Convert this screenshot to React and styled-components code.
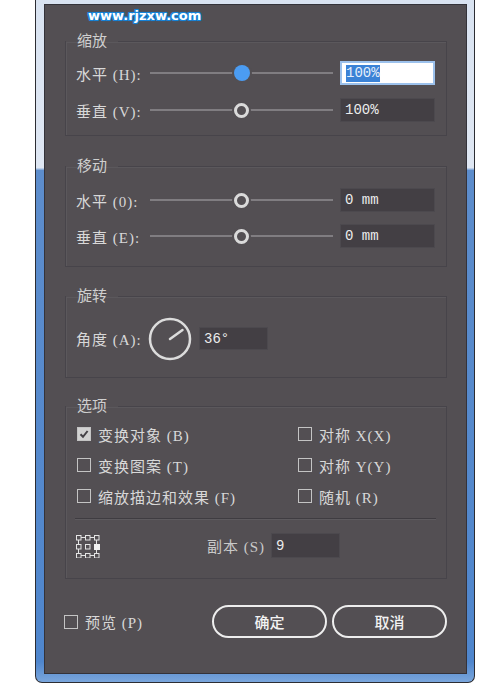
import React from 'react';
import styled, { createGlobalStyle } from 'styled-components';

const GlobalStyle = createGlobalStyle`
  html, body {
    margin: 0;
    background: #ffffff;
  }
  body {
    font-family: "Liberation Serif", "Noto Sans CJK SC", serif;
  }
`;

const Frame = styled.div`
  box-sizing: border-box;
  margin-left: 35px;
  width: 440px;
  height: 683px;
  padding: 4px 7px 8px 8px;
  border: 1px solid #2c2d33;
  border-top: none;
  border-radius: 0 0 7px 7px;
  background: linear-gradient(
    to bottom,
    #d9e3f1 0,
    #dfe7f3 24.6%,
    #5d8dcc 25%,
    #4f86cd 97%,
    #7aa6dc 100%
  );
`;

const Panel = styled.div`
  box-sizing: border-box;
  height: 670px;
  border: 1px solid #34333a;
  background: #534f53;
  padding: 0 19px 0 20px;
  display: flex;
  flex-direction: column;
  color: #d6d6d6;
`;

const Watermark = styled.div`
  height: 27px;
  padding: 2px 0 0 23px;
  box-sizing: border-box;
  font-family: "DejaVu Sans", Verdana, sans-serif;
  font-weight: bold;
  font-size: 13px;
  line-height: 18px;
  color: #ffffff;
  text-shadow: 1px 0 0 #1683d8, -1px 0 0 #1683d8, 0 1px 0 #1683d8,
    0 -1px 0 #1683d8, 1px 1px 0 #1683d8, -1px -1px 0 #1683d8,
    1px -1px 0 #1683d8, -1px 1px 0 #1683d8, 0 0 3px #1683d8;
`;

const Group = styled.fieldset`
  margin: ${p => p.$mt || 0}px 0 0 0;
  padding: ${p => p.$pt}px 10px ${p => p.$pb}px 10px;
  border: 1px solid #47444a;
  box-shadow: inset 1px 1px 0 #5b585c;
  min-width: 0;
  display: flex;
  flex-direction: column;
  gap: ${p => p.$gap || 0}px;
`;

const Legend = styled.legend`
  padding: 0 11px;
  margin-left: -10px;
  font-size: 15px;
  line-height: 18px;
  color: #cfcfcf;
`;

const Row = styled.div`
  display: flex;
  align-items: center;
  height: ${p => p.$h || 24}px;
`;

const Label = styled.span`
  width: ${p => p.$w || 74}px;
  flex: none;
  font-size: 15px;
  letter-spacing: 1px;
  color: #d8d8d8;
  white-space: nowrap;
`;

const Track = styled.div`
  width: 183px;
  height: 24px;
  flex: none;
  display: flex;
  align-items: center;
  justify-content: center;
  background: linear-gradient(#807d81, #807d81) center / 100% 2px no-repeat;
  margin-right: 7px;
`;

const Knob = styled.div`
  box-sizing: border-box;
  width: ${p => (p.$active ? 16 : 15)}px;
  height: ${p => (p.$active ? 16 : 15)}px;
  border-radius: 50%;
  background: ${p => (p.$active ? '#4b9cf2' : '#534f53')};
  border: ${p => (p.$active ? 'none' : '3px solid #dadada')};
  box-shadow: 0 0 0 2px #534f53;
`;

const ValueBox = styled.div`
  box-sizing: border-box;
  width: ${p => p.$w || 95}px;
  height: ${p => p.$h || 24}px;
  flex: none;
  display: flex;
  align-items: center;
  padding-left: 4px;
  font-family: "Liberation Mono", monospace;
  font-size: 14px;
  color: #ececec;
  background: ${p => (p.$focus ? '#ffffff' : '#433f44')};
  border: ${p => (p.$focus ? '2px solid #9cc1ec' : '1px solid #4c494e')};
`;

const Selected = styled.span`
  background: #3b82d6;
  color: #e6eefa;
  line-height: 17px;
`;

const Dial = styled.svg`
  flex: none;
  margin: 0 7px 0 0;
`;

const Options = styled.div`
  display: grid;
  grid-template-columns: 221px 1fr;
  row-gap: 11px;
  padding-left: 1px;
`;

const Check = styled.label`
  display: flex;
  align-items: center;
  height: 20px;
  font-size: 15px;
  letter-spacing: 1px;
  color: #d8d8d8;
  white-space: nowrap;
`;

const Box = styled.span`
  box-sizing: border-box;
  width: 14px;
  height: 14px;
  flex: none;
  margin-right: 7px;
  border: 1.5px solid #c4c4c4;
  background: ${p => (p.$checked ? '#d2d2d2' : 'transparent')};
  display: flex;
  align-items: center;
  justify-content: center;
`;

const Separator = styled.div`
  height: 0;
  margin: 12px 0 13px -1px;
  border-top: 1px solid #3f3c41;
  border-bottom: 1px solid #5d5a5e;
`;

const CopyRow = styled.div`
  display: flex;
  align-items: center;
  height: 25px;
  padding-left: 0;
  margin-left: -1px;
`;

const CopyLabel = styled.span`
  margin-left: 107px;
  width: 64px;
  font-size: 15px;
  letter-spacing: 1px;
  color: #c9c9c9;
`;

const Footer = styled.div`
  display: flex;
  align-items: center;
  margin-top: 26px;
  height: 33px;
`;

const FooterCheck = styled(Check)`
  margin-left: -1px;
  width: 149px;
`;

const Buttons = styled.div`
  display: flex;
  gap: 5px;
`;

const Button = styled.button`
  box-sizing: border-box;
  width: 115px;
  height: 33px;
  border: 2px solid #eeeeee;
  border-radius: 17px;
  background: transparent;
  color: #f2f2f2;
  font-family: "Noto Sans CJK SC", sans-serif;
  font-weight: 500;
  font-size: 15px;
  cursor: pointer;
`;

function Slider({ label, value, active }) {
  return (
    <Row>
      <Label>{label}</Label>
      <Track>
        <Knob $active={active} />
      </Track>
      <ValueBox $focus={active}>
        {active ? <Selected>{value}</Selected> : value}
      </ValueBox>
    </Row>
  );
}

function CheckItem({ label, checked }) {
  return (
    <Check>
      <Box $checked={checked}>
        {checked && (
          <svg width="10" height="10" viewBox="0 0 10 10">
            <path d="M1.5 5.2 L4 7.8 L8.6 2" fill="none" stroke="#454247" strokeWidth="2" />
          </svg>
        )}
      </Box>
      {label}
    </Check>
  );
}

function GridIcon() {
  const pos = [1, 10, 19];
  return (
    <svg width="25" height="24" viewBox="0 0 25 24">
      <g stroke="#e4e4e4" strokeWidth="1" fill="none">
        <line x1="6" y1="3.5" x2="10" y2="3.5" />
        <line x1="15" y1="3.5" x2="19" y2="3.5" />
        <line x1="6" y1="21.5" x2="10" y2="21.5" />
        <line x1="15" y1="21.5" x2="19" y2="21.5" />
        <line x1="3.5" y1="6" x2="3.5" y2="10" />
        <line x1="3.5" y1="15" x2="3.5" y2="19" />
        <line x1="21.5" y1="6" x2="21.5" y2="10" />
        <line x1="21.5" y1="15" x2="21.5" y2="19" />
        {pos.map(y =>
          pos.map(x =>
            x === 19 && y === 10 ? null : (
              <rect key={`${x}-${y}`} x={x + 0.5} y={y + 0.5} width="4.5" height="4.5" />
            )
          )
        )}
      </g>
      <rect x="19" y="10" width="6" height="6" fill="#f2f2f2" />
    </svg>
  );
}

export default function App() {
  return (
    <>
      <GlobalStyle />
      <Frame>
        <Panel>
          <Watermark>www.rjzxw.com</Watermark>

          <Group $pt={11} $pb={13} $gap={13}>
            <Legend>缩放</Legend>
            <Slider label="水平 (H):" value="100%" active />
            <Slider label="垂直 (V):" value="100%" />
          </Group>

          <Group $mt={21} $pt={13} $pb={18} $gap={12}>
            <Legend>移动</Legend>
            <Slider label="水平 (0):" value="0 mm" />
            <Slider label="垂直 (E):" value="0 mm" />
          </Group>

          <Group $mt={20} $pt={12} $pb={17}>
            <Legend>旋转</Legend>
            <Row $h={43}>
              <Label $w={72}>角度 (A):</Label>
              <Dial width="44" height="44" viewBox="0 0 44 44">
                <circle cx="22" cy="22" r="20" fill="none" stroke="#dcdcdc" strokeWidth="2.5" />
                <line x1="22" y1="22" x2="34.5" y2="13" stroke="#dcdcdc" strokeWidth="2.5" strokeLinecap="round" />
              </Dial>
              <ValueBox $w={69} $h={23}>36°</ValueBox>
            </Row>
          </Group>

          <Group $mt={19} $pt={9} $pb={20}>
            <Legend>选项</Legend>
            <Options>
              <CheckItem label="变换对象 (B)" checked />
              <CheckItem label="对称 X(X)" />
              <CheckItem label="变换图案 (T)" />
              <CheckItem label="对称 Y(Y)" />
              <CheckItem label="缩放描边和效果 (F)" />
              <CheckItem label="随机 (R)" />
            </Options>
            <Separator />
            <CopyRow>
              <GridIcon />
              <CopyLabel>副本 (S)</CopyLabel>
              <ValueBox $w={69} $h={25}>9</ValueBox>
            </CopyRow>
          </Group>

          <Footer>
            <FooterCheck>
              <Box />
              预览 (P)
            </FooterCheck>
            <Buttons>
              <Button>确定</Button>
              <Button>取消</Button>
            </Buttons>
          </Footer>
        </Panel>
      </Frame>
    </>
  );
}
